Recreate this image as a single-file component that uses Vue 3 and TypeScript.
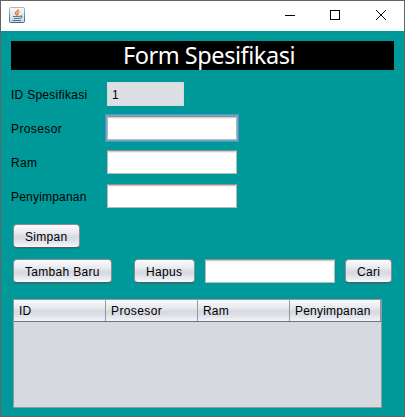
<script setup lang="ts">
import { ref } from 'vue'

interface Field {
  id: string
  label: string
  value: string
  kind: string
}

const fields = ref<Field[]>([
  { id: 'id', label: 'ID Spesifikasi', value: '1', kind: 'locked' },
  { id: 'prosesor', label: 'Prosesor', value: '', kind: 'focused' },
  { id: 'ram', label: 'Ram', value: '', kind: '' },
  { id: 'penyimpanan', label: 'Penyimpanan', value: '', kind: '' },
])
const columns: string[] = ['ID', 'Prosesor', 'Ram', 'Penyimpanan']
const query = ref('')
</script>

<template>
  <div class="window">
    <header class="titlebar">
      <svg class="app-icon" width="16" height="16" viewBox="0 0 16 16">
        <defs>
          <linearGradient id="tile" x1="0" y1="0" x2="0" y2="1">
            <stop offset="0" stop-color="#f8fafb" />
            <stop offset="1" stop-color="#ced8df" />
          </linearGradient>
          <linearGradient id="edge" x1="0" y1="0" x2="0" y2="1">
            <stop offset="0" stop-color="#a9b8c3" />
            <stop offset="1" stop-color="#456780" />
          </linearGradient>
        </defs>
        <rect x=".5" y=".5" width="15" height="15" rx="1" fill="url(#tile)" stroke="url(#edge)" />
        <path d="M9.4 2.2C9.6 4 6.2 4.600 6.400 6.200 6.500 7 7.600 7.500 7.800 8.500M10.600 4.500C8.500 5.300 8 6 8.800 6.800 9.300 7.500 8.800 8 8.400 8.500" fill="none" stroke="#e67a26" stroke-width="1.300" />
        <path d="M4 9.500H11M5 11.500H10.500M3.500 13.500H12M11 9.200C13.600 8.300 13.400 10.900 10.800 11.400" fill="none" stroke="#4d7894" stroke-width="1.100" />
      </svg>
      <div class="controls">
        <svg width="46" height="30" viewBox="0 0 46 30"><path d="M11 14.500H21" /></svg>
        <svg width="46" height="30" viewBox="0 0 46 30"><rect x="10.500" y="9.500" width="9" height="9" /></svg>
        <svg width="46" height="30" viewBox="0 0 46 30"><path d="M10 9L20 19M20 9L10 19" /></svg>
      </div>
    </header>

    <main class="content">
      <h1 class="heading"><span>Form Spesifikasi</span></h1>

      <form class="fields" @submit.prevent>
        <div v-for="field in fields" :key="field.id" class="field">
          <label :for="field.id" :class="['label', field.id]">{{ field.label }}</label>
          <input :id="field.id" v-model="field.value" :class="['input', field.kind]" :readonly="field.kind === 'locked'" />
        </div>
      </form>

      <div class="actions">
        <button class="button save">Simpan</button>
      </div>
      <div class="actions second">
        <button class="button add">Tambah Baru</button>
        <button class="button remove">Hapus</button>
        <input v-model="query" class="input search" />
        <button class="button find">Cari</button>
      </div>

      <div class="table">
        <div class="table-head">
          <div v-for="column in columns" :key="column" :class="['cell', column.toLowerCase()]">{{ column }}</div>
        </div>
      </div>
    </main>
  </div>
</template>

<style>
body {
  margin: 0;
  overflow: hidden;
}
</style>

<style scoped>
.window {
  box-sizing: border-box;
  width: 405px;
  height: 417px;
  border: 1px solid #646464;
  background: #009999;
  color: #000;
  font: 12px/14px "Liberation Sans", Arial, sans-serif;
}
.titlebar {
  display: flex;
  justify-content: space-between;
  height: 30px;
  background: #fff;
}
.app-icon {
  margin: 6px 0 0 8px;
}
.controls {
  display: flex;
  margin-right: -8px;
}
.controls svg {
  fill: none;
  stroke: #000;
  stroke-width: 1;
}
.content {
  padding: 10px 10px 0;
}
.heading {
  height: 29px;
  margin: 0;
  background: #000;
  color: #fff;
  font: 23.5px/29px "Noto Sans", sans-serif;
  letter-spacing: -0.45px;
  text-align: center;
  white-space: nowrap;
}
.heading span {
  display: block;
  padding-left: 13px;
}
.fields {
  display: flex;
  flex-direction: column;
  gap: 10px;
  margin-top: 12px;
}
.field {
  display: flex;
  align-items: center;
  height: 24px;
}
.label {
  width: 96px;
  padding-top: 1px;
  white-space: nowrap;
}
.label.id {
  letter-spacing: 0.27px;
}
.label.prosesor {
  letter-spacing: 0.4px;
}
.label.ram {
  letter-spacing: 0.3px;
}
.label.penyimpanan {
  letter-spacing: 0.2px;
}
.input {
  box-sizing: border-box;
  width: 130px;
  height: 24px;
  padding: 2px 4px 0;
  border: 1px solid #b7babd;
  border-top-color: #8d8e8f;
  border-radius: 0;
  outline: 0;
  background: linear-gradient(#cfcfcf 0 1px, #f0f0f0 1px 2px, #fff 2px);
  color: #000;
  font: inherit;
}
.input.locked {
  width: 77px;
  border-color: #d5d9de;
  background: #dce0e5;
}
.input.focused {
  box-shadow: 0 0 0 1px #73a4d1, 0 0 0 2px #4a9abb;
}
.actions {
  display: flex;
  margin: 16px 0 0 2px;
}
.actions.second {
  margin-top: 11px;
}
.button {
  box-sizing: border-box;
  height: 24px;
  padding: 2px 0 0 11px;
  border: 1px solid #898c92;
  border-bottom-color: #555b63;
  border-radius: 4px;
  background: linear-gradient(#fafbfc 0, #e8eaee 35%, #d6d9df 55%, #dfe2e8 72%, #f6f8fe 100%);
  box-shadow: 0 1px 0 #07898c;
  color: #000;
  font: inherit;
  letter-spacing: 0.3px;
  text-align: left;
  white-space: nowrap;
}
.save {
  width: 67px;
}
.add {
  width: 99px;
}
.remove {
  width: 61px;
  margin-left: 22px;
}
.search {
  margin-left: 10px;
}
.find {
  width: 47px;
  margin-left: 10px;
}
.table {
  box-sizing: border-box;
  width: 369px;
  height: 109px;
  margin: 16px 0 0 2px;
  border: 1px solid #9297a1;
  background: #d6d9e0;
}
.table-head {
  display: flex;
  height: 21px;
  border-bottom: 1px solid #70757f;
  background: linear-gradient(#fafbfc 0, #e8eaee 35%, #d6d9df 55%, #dfe2e8 75%, #f3f5fb 100%);
}
.cell {
  box-sizing: border-box;
  width: 92px;
  padding: 4px 0 0 5px;
  border-right: 1px solid #9297a1;
  letter-spacing: 0.2px;
}
.cell.prosesor {
  letter-spacing: 0.4px;
}
.cell:last-child {
  width: 91px;
}
</style>
